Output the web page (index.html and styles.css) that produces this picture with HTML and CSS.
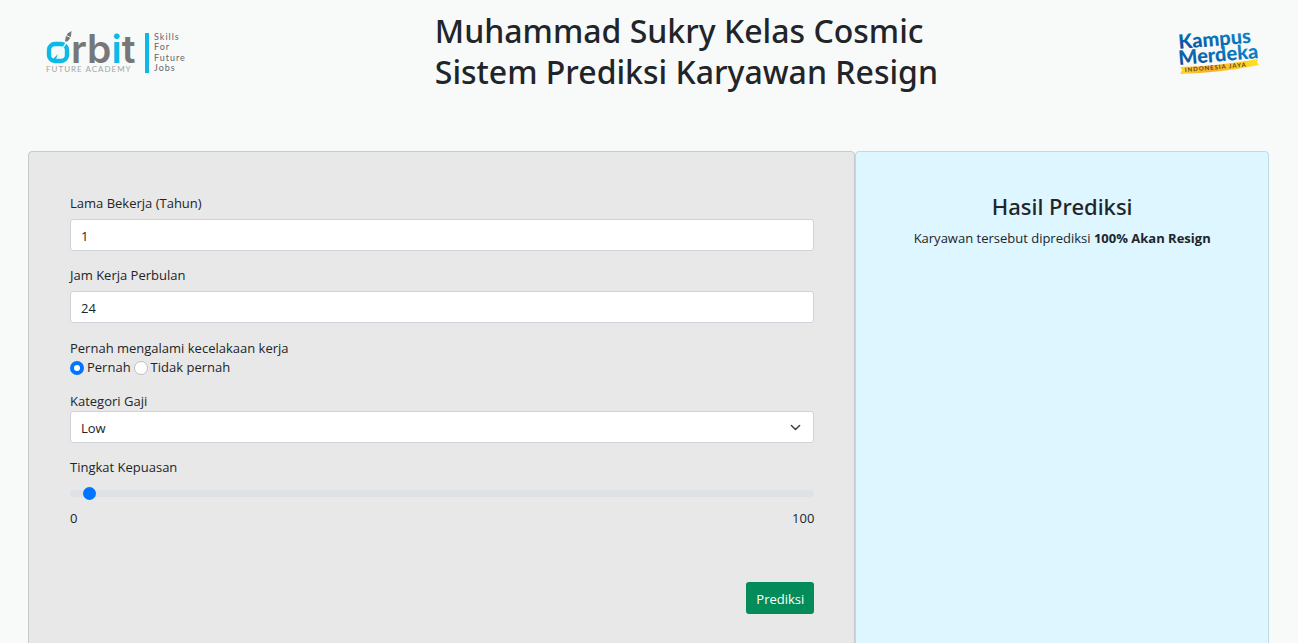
FILE: index.html
```
<!DOCTYPE html>
<html lang="id">
<head>
<meta charset="utf-8">
<meta name="viewport" content="width=device-width, initial-scale=1">
<title>Sistem Prediksi Karyawan Resign</title>
<link rel="stylesheet" href="styles.css">
</head>
<body>
<header class="header">
  <svg class="logo-orbit" viewBox="0 -10 144 60" role="img" aria-label="Orbit Future Academy">
    <rect x="3" y="14" width="18" height="17" rx="6" fill="none" stroke="#0db9e6" stroke-width="4.400"/>
    <path d="M5 31l7-7-2 5-3 2z" fill="#0db9e6"/>
    <path d="M17.500 17l4-6.500" stroke="#f8faf9" stroke-width="1.400"/>
    <path d="M19 11.500l.5-3.500 2-4.500L25.500 1 25 6l-2 4-2 1.500z" fill="#777"/>
    <path d="M20.500 5.500l4 2" stroke="#f8faf9" stroke-width="1"/>
    <text class="orbit-word" x="25" y="33">rb<tspan class="orbit-i">i</tspan>t</text>
    <text class="orbit-sub" x="0" y="42">FUTURE ACADEMY</text>
    <rect x="99" y="3" width="4" height="40" fill="#0db9e6"/>
    <g class="orbit-tag">
      <text x="108" y="10">Skills</text>
      <text x="108" y="20">For</text>
      <text x="108" y="31">Future</text>
      <text x="108" y="41">Jobs</text>
    </g>
  </svg>
  <h1 class="title">Muhammad Sukry Kelas Cosmic<br>Sistem Prediksi Karyawan Resign</h1>
  <svg class="logo-kampus" viewBox="0 -6 84 60" role="img" aria-label="Kampus Merdeka Indonesia Jaya">
    <defs>
      <linearGradient id="blue" x1="0" y1="1" x2="1" y2="0">
        <stop offset="0" stop-color="#143f91"/>
        <stop offset=".5" stop-color="#0873b8"/>
        <stop offset="1" stop-color="#1597d3"/>
      </linearGradient>
      <linearGradient id="gold">
        <stop offset="0" stop-color="#ffd52b"/>
        <stop offset=".35" stop-color="#f9ad2d"/>
        <stop offset="1" stop-color="#ffe31f"/>
      </linearGradient>
    </defs>
    <g class="kampus-word" fill="url(#blue)">
      <text x="1" y="21" transform="rotate(-5 1 21)">Kampus</text>
      <text x="1" y="37" transform="rotate(-5 1 37)">Merdeka</text>
    </g>
    <path d="M2 39Q42 38 80 31L79 34L81 37Q42 45 2 46L4 42Z" fill="url(#gold)"/>
    <text class="kampus-sub" x="7" y="44" transform="rotate(-5 7 44)">INDONESIA JAYA</text>
  </svg>
</header>
<main class="panels">
  <form class="card form">
    <div class="field">
      <label for="lama">Lama Bekerja (Tahun)</label>
      <input class="control" id="lama" type="number" value="1">
    </div>
    <div class="field">
      <label for="jam">Jam Kerja Perbulan</label>
      <input class="control" id="jam" type="number" value="24">
    </div>
    <fieldset class="choices">
      <legend>Pernah mengalami kecelakaan kerja</legend>
      <div class="radios">
        <input class="radio" type="radio" name="kecelakaan" id="pernah" checked>
        <label for="pernah">Pernah</label>
        <input class="radio" type="radio" name="kecelakaan" id="tidak">
        <label for="tidak">Tidak pernah</label>
      </div>
    </fieldset>
    <div class="field field-tight">
      <label for="gaji">Kategori Gaji</label>
      <div class="select-wrap">
        <select class="control" id="gaji">
          <option>Low</option>
          <option>Medium</option>
          <option>High</option>
        </select>
        <svg class="chevron" viewBox="0 0 16 16" aria-hidden="true"><path d="M2 5l6 6 6-6" fill="none" stroke="#343a40" stroke-width="2" stroke-linecap="round" stroke-linejoin="round"/></svg>
      </div>
    </div>
    <div class="field">
      <label for="puas">Tingkat Kepuasan</label>
      <input class="range" id="puas" type="range" min="0" max="100" step="0.1" value="1.8">
      <div class="scale"><span>0</span><span>100</span></div>
    </div>
    <button class="submit" type="button">Prediksi</button>
  </form>
  <section class="card result">
    <h2>Hasil Prediksi</h2>
    <p>Karyawan tersebut diprediksi <b>100% Akan Resign</b></p>
  </section>
</main>
</body>
</html>
```
FILE: styles.css
```
* { box-sizing: border-box; }
body {
  margin: 0;
  background: #f8faf9;
  color: #212529;
  font: 13px/19px "Segoe UI", "Open Sans", sans-serif;
}
h1, h2 { font-family: "Segoe UI", "Noto Sans", sans-serif; font-weight: 500; }
.header {
  display: grid;
  grid-template-columns: 6fr auto 5fr;
  align-items: start;
  padding: 10px 36px 59px 46px;
}
.logo-orbit { width: 144px; height: 60px; margin-top: 10px; }
.orbit-word { font: 600 39px Inter, sans-serif; fill: #777; }
.orbit-i { fill: #0db9e6; }
.orbit-sub { font: 400 8px Lato, sans-serif; letter-spacing: 1px; fill: #a5a5a5; }
.orbit-tag { font: 400 9px Lato, sans-serif; letter-spacing: 1px; fill: #666; }
.title { margin: 0; font-size: 32px; line-height: 41px; }
.logo-kampus { width: 84px; height: 60px; margin-top: 12px; justify-self: end; }
.kampus-word { font: 900 20px Lato, sans-serif; }
.kampus-sub { font: 700 6px Lato, sans-serif; letter-spacing: 1px; fill: #59451f; }

.panels {
  display: grid;
  grid-template-columns: 2fr 1fr;
  padding: 0 29px 0 28px;
}
.card { border: 1px solid #c7c9ca; border-radius: 4px; padding: 41px; }
.form { display: flex; flex-direction: column; gap: 15px; padding: 42px 40px 41px 41px; background: #e8e8e8; }
.field { display: flex; flex-direction: column; gap: 6px; }
.field-tight { gap: 0; }
.control {
  width: 100%;
  height: 32px;
  padding: 2px 10px 0;
  border: 1px solid #ced4da;
  border-radius: 3px;
  background: #fff;
  color: inherit;
  font: inherit;
  appearance: none;
}
.select-wrap { display: grid; align-items: center; }
.select-wrap > * { grid-area: 1 / 1; }
.chevron { width: 11px; height: 11px; margin-right: 13px; justify-self: end; pointer-events: none; }
.choices { border: 0; margin: 0; padding: 0; }
.choices legend { padding: 0; line-height: 20px; }
.radios { display: flex; align-items: center; gap: 3px; }
.radio {
  appearance: none;
  width: 14px;
  height: 14px;
  margin: 0;
  border: 1px solid #bfbfbf;
  border-radius: 50%;
  background: #fff;
}
.radio:checked { border: 4px solid #0075ff; }
.range { appearance: none; width: 100%; height: 20px; margin: 0; background: transparent; }
.range::-webkit-slider-runnable-track { height: 7px; border-radius: 7px; background: #dee2e6; }
.range::-webkit-slider-thumb {
  appearance: none;
  width: 13px;
  height: 13px;
  margin-top: -3px;
  border-radius: 50%;
  background: #0075ff;
}
.scale { display: flex; justify-content: space-between; }
.submit {
  align-self: flex-end;
  height: 32px;
  margin-top: 39px;
  padding: 2px 10px 0;
  border: 0;
  border-radius: 3px;
  background: #048b5a;
  color: #fff;
  font: inherit;
}
.result { background: #ddf6ff; border-color: #bddbe3; text-align: center; }
.result h2 { margin: 0 0 9px; font-size: 22px; line-height: 27px; }
.result p { margin: 0; }
```
